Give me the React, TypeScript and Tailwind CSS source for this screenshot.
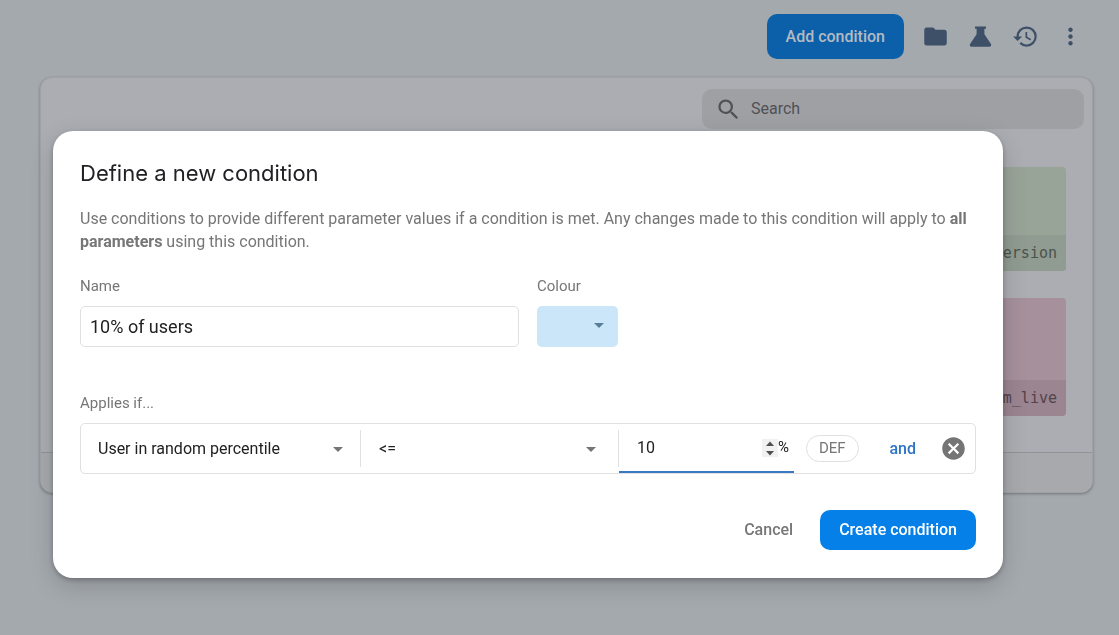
import { useState } from 'react';
import {
  MdArrowDropDown,
  MdCancel,
  MdFolder,
  MdHistory,
  MdMoreVert,
  MdSearch,
} from 'react-icons/md';

function FlaskIcon() {
  return (
    <svg viewBox="0 0 27 27" className="size-[27px]" fill="currentColor" aria-hidden="true">
      <path d="M8 3.4h11v2.4h-1.6v5.4l6.4 9.6c1 1.5.2 2.9-1.4 2.9H4.6c-1.6 0-2.4-1.4-1.4-2.9l6.4-9.6V5.8H8z" />
    </svg>
  );
}

function Header() {
  return (
    <header className="flex items-center justify-end gap-[18px] pt-3.5 pr-[35px] text-[#3d5068]">
      <button
        type="button"
        className="h-[45px] rounded-[10px] bg-[#0c60a9] px-[19px] text-base font-medium text-[#b3bac2]"
      >
        Add condition
      </button>
      <button type="button" aria-label="Groups">
        <MdFolder className="size-[27px]" />
      </button>
      <button type="button" aria-label="Experiments">
        <FlaskIcon />
      </button>
      <button type="button" aria-label="History">
        <MdHistory className="size-[27px]" />
      </button>
      <button type="button" aria-label="More">
        <MdMoreVert className="size-[27px]" />
      </button>
    </header>
  );
}

function ParametersCard() {
  return (
    <main className="mt-[18px] mr-[26px] ml-10 rounded-xl border border-[#9fa2a7] bg-[#abadb2] shadow-[0_1px_3px_rgba(0,0,0,0.3)]">
      <div className="flex justify-end px-2 pt-[11px]">
        <label className="flex h-10 w-[382px] items-center gap-[9px] rounded-[10px] bg-[#9fa0a4] px-[13px] text-[#4f5155]">
          <MdSearch className="size-[27px] shrink-0" />
          <input
            type="search"
            placeholder="Search"
            aria-label="Search"
            className="w-full bg-transparent text-base outline-none placeholder:text-[#4f5155]"
          />
        </label>
      </div>
      <div className="flex flex-col items-end gap-[27px] px-[26px] pt-[38px] pb-9 font-['DejaVu_Sans_Mono','Liberation_Mono',monospace] text-[15px]">
        <section className="w-60 overflow-hidden rounded-sm bg-[#99a499] text-[#4b534c]">
          <div className="h-[68px]" />
          <p className="bg-[#909b91] px-[9px] text-right leading-9">new_version</p>
        </section>
        <section className="w-60 overflow-hidden rounded-sm bg-[#a5909c] text-[#53434b]">
          <div className="h-[82px]" />
          <p className="bg-[#9a8591] px-[9px] text-right leading-9">stream_live</p>
        </section>
      </div>
      <footer className="h-10 rounded-b-xl border-t border-[#919398] bg-[#a7a9ad]" />
    </main>
  );
}

function ConditionDialog() {
  const [name, setName] = useState('10% of users');
  const [percent, setPercent] = useState(10);

  return (
    <form
      role="dialog"
      aria-labelledby="dialog-title"
      onSubmit={(event) => event.preventDefault()}
      className="w-full max-w-[950px] rounded-[20px] bg-white px-[27px] pt-[26px] pb-7 text-[#767676] shadow-[0_8px_24px_rgba(0,0,0,0.16),0_2px_5px_rgba(0,0,0,0.25)]"
    >
      <h1 id="dialog-title" className="font-['Inter',sans-serif] text-[22px] leading-8 text-[#202124]">
        Define a new condition
      </h1>
      <p className="mt-[18px] text-base leading-[23px]">
        Use conditions to provide different parameter values if a condition is met. Any changes made to this condition
        will apply to <strong className="font-bold">all parameters</strong> using this condition.
      </p>

      <div className="mt-[23px] flex gap-[18px]">
        <div className="flex w-[439px] flex-col gap-2.5">
          <label htmlFor="name" className="text-[15px] leading-5">
            Name
          </label>
          <input
            id="name"
            value={name}
            onChange={(event) => setName(event.target.value)}
            className="h-[41px] rounded-[5px] border border-[#e0e0e0] px-[9px] text-lg text-[#212121] outline-none"
          />
        </div>
        <div className="flex flex-col gap-2.5">
          <label htmlFor="colour" className="text-[15px] leading-5">
            Colour
          </label>
          <button
            id="colour"
            type="button"
            className="flex h-[41px] w-[81px] items-center justify-end rounded-[5px] bg-[#cce6f9] px-[7px] pb-1 text-[#587f95]"
          >
            <MdArrowDropDown className="size-6" />
          </button>
        </div>
      </div>

      <p className="mt-[46px] text-[15px] leading-5">Applies if...</p>
      <div className="mt-2.5 flex h-[51px] items-stretch rounded-[5px] border border-[#e0e0e0] text-base text-[#212121]">
        <div className="my-1.5 grid w-[280px] items-center border-r border-[#e0e0e0]">
          <select
            aria-label="Applies if"
            className="col-start-1 row-start-1 h-full w-full appearance-none bg-transparent pl-[17px] outline-none"
          >
            <option>User in random percentile</option>
          </select>
          <MdArrowDropDown className="pointer-events-none col-start-1 row-start-1 mr-2.5 size-6 justify-self-end text-[#757575]" />
        </div>
        <div className="my-1.5 grid w-[258px] items-center border-r border-[#e0e0e0]">
          <select
            aria-label="Operator"
            className="col-start-1 row-start-1 h-full w-full appearance-none bg-transparent pl-[18px] outline-none"
          >
            <option>&lt;=</option>
          </select>
          <MdArrowDropDown className="pointer-events-none col-start-1 row-start-1 mr-[15px] size-6 justify-self-end text-[#757575]" />
        </div>
        <div className="flex w-[175px] items-center border-b-2 border-[#3b78c4] pr-[5px] pl-[18px]">
          <input
            type="number"
            aria-label="Percent"
            value={percent}
            onChange={(event) => setPercent(Number(event.target.value))}
            className="w-full min-w-0 [appearance:textfield] bg-transparent outline-none [&::-webkit-inner-spin-button]:appearance-none"
          />
          <div className="flex h-[18px] shrink-0 flex-col bg-[#f1f1f1] text-[#505050]">
            <button type="button" aria-label="Increase" onClick={() => setPercent(percent + 1)}>
              <svg viewBox="0 0 16 9" className="block h-[9px] w-4" fill="currentColor">
                <path d="M8 2.6 12 7H4z" />
              </svg>
            </button>
            <button type="button" aria-label="Decrease" onClick={() => setPercent(percent - 1)}>
              <svg viewBox="0 0 16 9" className="block h-[9px] w-4" fill="currentColor">
                <path d="M4 3h8L8 7.4z" />
              </svg>
            </button>
          </div>
          <span className="text-[15px]">%</span>
        </div>
        <div className="flex flex-1 items-center pr-2 pl-3">
          <span className="rounded-full border border-[#e0e0e0] px-3 text-[15px] leading-[25px] text-[#767676]">
            DEF
          </span>
          <button type="button" className="ml-auto font-medium text-[#2f74c6]">
            and
          </button>
          <button type="button" aria-label="Remove" className="ml-6 text-[#757575]">
            <MdCancel className="size-[27px]" />
          </button>
        </div>
      </div>

      <div className="mt-9 flex items-center justify-end gap-[27px] text-base font-medium">
        <button type="button">Cancel</button>
        <button type="submit" className="h-10 rounded-[10px] bg-[#0580e8] px-[19px] text-white">
          Create condition
        </button>
      </div>
    </form>
  );
}

export default function App() {
  return (
    <div className="min-h-screen bg-[#a4a9ae] font-['Roboto',sans-serif]">
      <Header />
      <ParametersCard />
      <div className="fixed inset-0 flex items-start justify-center pt-[131px] pr-[63px]">
        <ConditionDialog />
      </div>
    </div>
  );
}
